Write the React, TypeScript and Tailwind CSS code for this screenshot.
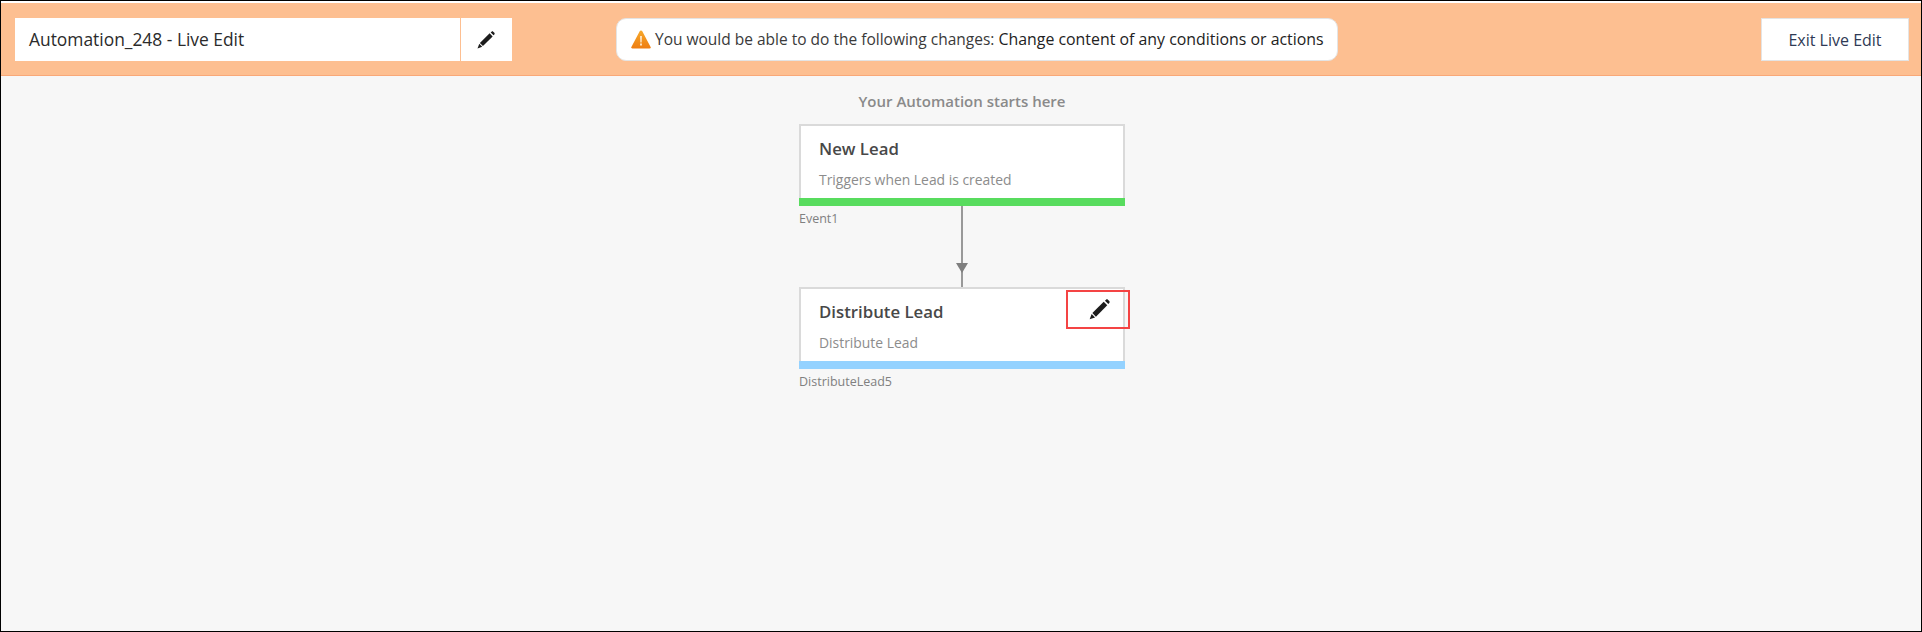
import React from "react";

const FONT = "font-['Open_Sans','Noto_Sans',sans-serif]";

const Pencil: React.FC<{ className?: string }> = ({ className }) => (
  <svg viewBox="0 0 20 20" className={className} fill="currentColor">
    <path d="M15.2 1.6 16.2.7c.6-.5 1.3-.5 1.8 0l1.3 1.3c.5.5.5 1.2 0 1.8l-.9 1z" />
    <path d="M14 2.6 17.4 6 6.6 16.8 3.2 13.4z" />
    <path d="M2.5 14.2 5.8 17.5.6 19.4z" />
  </svg>
);

const WarningIcon: React.FC = () => (
  <svg viewBox="0 0 20 19" className="h-[19px] w-[20px] shrink-0">
    <defs>
      <linearGradient id="warn" x1="0" y1="0" x2="0" y2="1">
        <stop offset="0" stopColor="#f7a92c" />
        <stop offset="1" stopColor="#ee7d11" />
      </linearGradient>
    </defs>
    <path d="M10 .5c.6 0 1 .3 1.3.8l8.3 15.6c.5.9 0 1.6-1 1.6H1.4c-1 0-1.5-.7-1-1.6L8.7 1.3C9 .8 9.4.5 10 .5z" fill="url(#warn)" />
    <path d="M9 6h2l-.3 6.5H9.3z" fill="#fde3c0" />
    <rect x="9" y="13.5" width="2" height="2" fill="#fde3c0" />
  </svg>
);

interface NodeCardProps {
  title: string;
  description: string;
  label: string;
  barClass: string;
  editable?: boolean;
}

const NodeCard: React.FC<NodeCardProps> = ({ title, description, label, barClass, editable }) => (
  <div className="w-[326px]">
    <div className="relative h-[82px] border-x-2 border-t-2 border-[#dadada] bg-white">
      <div className="pl-[18px] pt-[11px] text-[16.8px] leading-[24px] font-semibold text-[#484848]">{title}</div>
      <div className="pl-[18px] pt-[9px] text-[13.9px] leading-[20px] text-[#8c8c8c]">{description}</div>
      {editable && (
        <div className="absolute right-[-7px] top-[1px] flex h-[39px] w-[64px] items-center justify-center border-2 border-[#f44444]">
          <Pencil className="ml-[3px] mb-[1px] h-[21px] w-[21px] text-[#1c1c1c]" />
        </div>
      )}
      <div className={`absolute -inset-x-[2px] bottom-0 h-[8px] ${barClass}`} />
    </div>
    <div className="mt-[3px] h-[20px] text-[12.5px] leading-[20px] text-[#808080]">{label}</div>
  </div>
);

export default function App() {
  return (
    <div className={`flex h-[632px] w-[1922px] flex-col overflow-hidden border border-black bg-[#f7f7f7] ${FONT}`}>
      <div className="h-[2px] bg-white" />
      <header className="flex h-[73px] items-start border-b border-[#f9a878] bg-[#fdbf91] pl-[14px] pr-[12px] pt-[15px]">
        <div className="flex h-[43px] w-[498px]">
          <div className="flex w-[445px] items-center bg-white pl-[14px] text-[17.4px] text-[#2b2b2b]">
            Automation_248 - Live Edit
          </div>
          <div className="ml-px flex w-[51px] items-center justify-center bg-white">
            <Pencil className="mr-[2px] h-[18px] w-[18px] text-[#1c1c1c]" />
          </div>
        </div>
        <div className="ml-[103px] flex h-[43px] w-[722px] items-center gap-[4px] rounded-[10px] border border-[#e4e4e4] bg-white pl-[14px] text-[15.5px] text-[#3a3a3a]">
          <WarningIcon />
          <span className="whitespace-nowrap">
            You would be able to do the following changes: <span className="text-[15.9px] text-[#222222]">Change content of any conditions or actions</span>
          </span>
        </div>
        <button className="ml-auto flex h-[43px] w-[148px] items-center justify-center border border-[#e4e4e4] bg-white text-[16px] text-[#2f3a55]">
          Exit Live Edit
        </button>
      </header>
      <main className="flex flex-1 flex-col items-center pl-[2px] pt-[15px]">
        <div className="h-[20px] text-[15px] leading-[20px] font-semibold text-[#8a8a8a]">Your Automation starts here</div>
        <div className="mt-[13px] flex flex-col items-center">
          <NodeCard title="New Lead" description="Triggers when Lead is created" label="Event1" barClass="bg-[#58dc5e]" />
          <div className="-mt-[23px] flex h-[81px] w-[2px] flex-col items-center bg-[#999999]">
            <div className="mt-[57px] h-0 w-0 shrink-0 border-x-[6px] border-t-[10px] border-x-transparent border-t-[#7f7f7f]" />
          </div>
          <NodeCard title="Distribute Lead" description="Distribute Lead" label="DistributeLead5" barClass="bg-[#94d2ff]" editable />
        </div>
      </main>
    </div>
  );
}
